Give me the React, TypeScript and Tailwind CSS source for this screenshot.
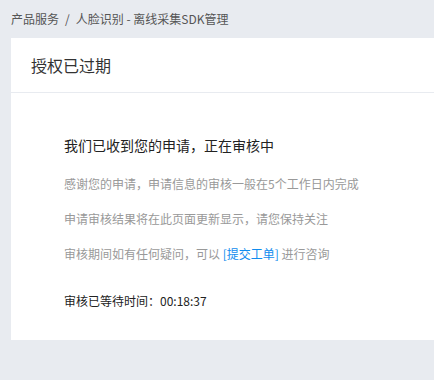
export default function App() {
    return (
        <div
            className="w-[434px] h-[380px] overflow-hidden bg-[#e8ebf0] pl-[11px]"
            style={{ fontFamily: '"Noto Sans CJK SC", "Liberation Sans", sans-serif' }}
        >
            <div className="h-[38px] flex items-center text-[12px] text-[#555]">
                <span>产品服务</span>
                <span className="mx-[6px]">/</span>
                <span>人脸识别 - 离线采集SDK管理</span>
            </div>
            <div className="w-[460px] h-[302px] bg-white">
                <div className="h-[55px] flex items-center pl-[20px] border-b border-[#e8ebf0] text-[16px] text-[#333]">
                    授权已过期
                </div>
                <div className="pl-[53px] pt-[42px] flex flex-col">
                    <div className="text-[14px] leading-[20px] text-[#222]">我们已收到您的申请，正在审核中</div>
                    <div className="mt-[19px] flex flex-col gap-[15px] text-[12px] leading-[20px] text-[#999]">
                        <p>感谢您的申请，申请信息的审核一般在5个工作日内完成</p>
                        <p>申请审核结果将在此页面更新显示，请您保持关注</p>
                        <p>
                            审核期间如有任何疑问，可以 <a className="text-[#108cee]">[提交工单]</a> 进行咨询
                        </p>
                    </div>
                    <div className="mt-[27px] text-[12px] leading-[20px] text-[#222]">审核已等待时间：00:18:37</div>
                </div>
            </div>
        </div>
    );
}
